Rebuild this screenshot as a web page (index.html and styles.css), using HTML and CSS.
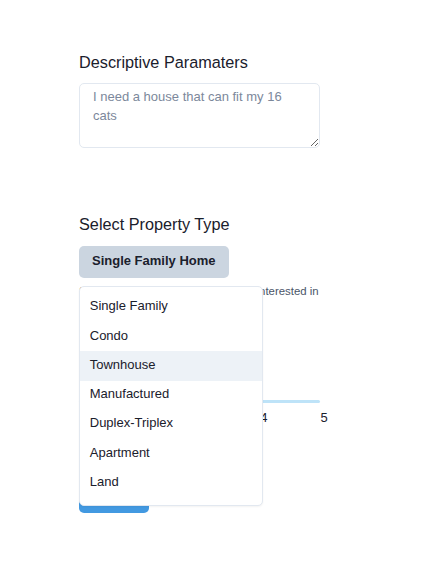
FILE: index.html
```html
<!DOCTYPE html>
<html lang="en">
<head>
<meta charset="utf-8">
<title>Search</title>
<link rel="stylesheet" href="styles.css">
</head>
<body>
<main class="page">
  <section class="field">
    <h2 class="label">Descriptive Paramaters</h2>
    <textarea class="textarea" placeholder="I need a house that can fit my 16 cats"></textarea>
  </section>

  <section class="field field-type">
    <h2 class="label">Select Property Type</h2>
    <div class="menu-wrap">
      <button class="menu-button" type="button">Single Family Home</button>
      <ul class="menu-list">
        <li class="menu-item">Single Family</li>
        <li class="menu-item">Condo</li>
        <li class="menu-item is-hover">Townhouse</li>
        <li class="menu-item">Manufactured</li>
        <li class="menu-item">Duplex-Triplex</li>
        <li class="menu-item">Apartment</li>
        <li class="menu-item">Land</li>
      </ul>
    </div>
    <p class="hint">Select how many bedrooms you're interested in</p>
    <div class="slider">
      <div class="slider-track"></div>
      <div class="slider-marks">
        <span class="mark" style="left:75%">4</span>
        <span class="mark" style="left:100%">5</span>
      </div>
    </div>
    <button class="submit" type="button">Search</button>
  </section>
</main>
</body>
</html>
```

FILE: styles.css
```css
html, body {
  margin: 0;
  padding: 0;
  background: #ffffff;
}

body {
  font-family: "Liberation Sans", Arial, sans-serif;
  color: #1A202C;
}

.page {
  width: 241px;
  margin-left: 79px;
  padding-top: 52.5px;
}

.field {
  display: flex;
  flex-direction: column;
  align-items: flex-start;
}

.label {
  margin: 0 0 11px 0;
  font-size: 16.25px;
  line-height: 19.5px;
  font-weight: 400;
  color: #1A202C;
}

.textarea {
  box-sizing: border-box;
  width: 241px;
  height: 65px;
  margin: 0;
  padding: 2.5px 13px;
  border: 1px solid #E2E8F0;
  border-radius: 5px;
  font-family: "Liberation Sans", Arial, sans-serif;
  font-size: 13px;
  line-height: 19.5px;
  color: #1A202C;
  resize: vertical;
  outline: none;
}

.textarea::placeholder {
  color: #7C889B;
  opacity: 1;
}

.field-type {
  margin-top: 67px;
}

.field-type .label {
  margin-bottom: 11px;
}

.menu-wrap {
  position: relative;
}

.menu-button {
  box-sizing: border-box;
  height: 32px;
  padding: 0 13px 3px;
  margin: 0;
  border: none;
  border-radius: 5px;
  background: #CBD5E0;
  font-family: "Liberation Sans", Arial, sans-serif;
  font-size: 13px;
  font-weight: 700;
  color: #1A202C;
}

.menu-list {
  position: absolute;
  top: calc(100% + 8px);
  left: 0;
  z-index: 10;
  box-sizing: border-box;
  width: 183.5px;
  margin: 0;
  padding: 6.5px 0 7px;
  list-style: none;
  background: #ffffff;
  border: 1px solid #E2E8F0;
  border-radius: 5px;
  box-shadow: 0 1px 2px rgba(0, 0, 0, 0.05);
}

.menu-item {
  padding: 3.4px 9.75px 6.35px;
  font-size: 13px;
  line-height: 19.5px;
  color: #1A202C;
}

.menu-item.is-hover {
  background: #EDF2F7;
}

.hint {
  margin: 5.3px 0 0 0;
  font-size: 11.4px;
  line-height: 17.1px;
  color: #4A5568;
  white-space: nowrap;
}

.slider {
  position: relative;
  width: 241px;
  margin-top: 100px;
}

.slider-track {
  height: 3.5px;
  border-radius: 2px;
  background: #BEE3F8;
}

.slider-marks {
  position: relative;
  height: 19.5px;
  margin-top: 4.5px;
}

.mark {
  position: absolute;
  top: 0;
  margin-left: 0.5px;
  font-size: 13px;
  line-height: 19.5px;
  color: #1A202C;
}

.submit {
  box-sizing: border-box;
  width: 70px;
  height: 32.5px;
  margin-top: 53.5px;
  padding: 0;
  border: none;
  border-radius: 5px;
  background: #4299E1;
  font-family: "Liberation Sans", Arial, sans-serif;
  font-size: 13px;
  font-weight: 700;
  color: #ffffff;
}
```
